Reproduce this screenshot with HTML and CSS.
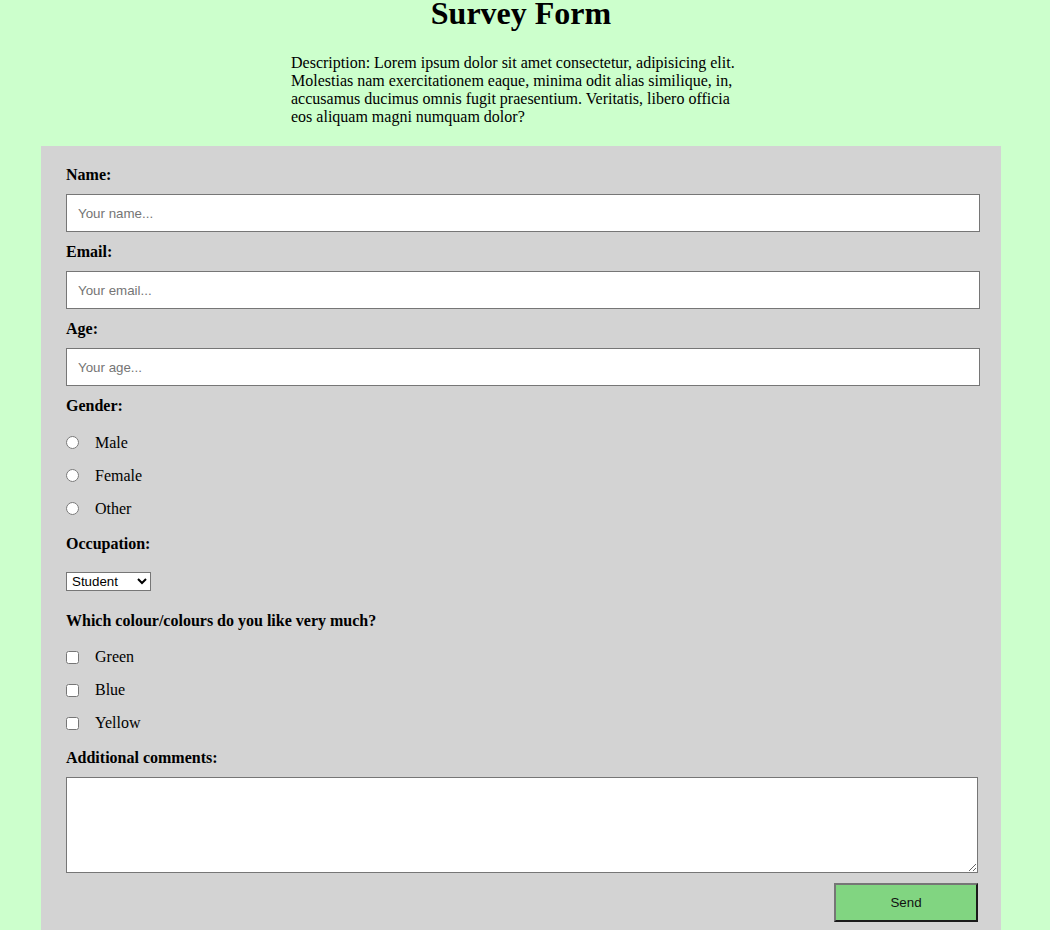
FILE: index.html
```html
<!DOCTYPE html>
<html lang="en">
<head>
<meta charset="utf-8">
<title>Survey Form</title>
<link rel="stylesheet" href="styles.css">
</head>
<body>
<div class="page">
  <h1 class="title">Survey Form</h1>
  <p class="description">Description: Lorem ipsum dolor sit amet consectetur, adipisicing elit. Molestias nam exercitationem eaque, minima odit alias similique, in, accusamus ducimus omnis fugit praesentium. Veritatis, libero officia eos aliquam magni numquam dolor?</p>
  <form class="survey">
    <label class="field-label" for="name">Name:</label>
    <input class="text-input" id="name" type="text" placeholder="Your name...">
    <label class="field-label" for="email">Email:</label>
    <input class="text-input" id="email" type="email" placeholder="Your email...">
    <label class="field-label" for="age">Age:</label>
    <input class="text-input" id="age" type="number" placeholder="Your age...">

    <div class="field-label">Gender:</div>
    <div class="choices">
      <label class="choice"><input class="choice-box" type="radio" name="gender">Male</label>
      <label class="choice"><input class="choice-box" type="radio" name="gender">Female</label>
      <label class="choice"><input class="choice-box" type="radio" name="gender">Other</label>
    </div>

    <label class="field-label" for="occupation">Occupation:</label>
    <select class="select" id="occupation">
      <option>Student</option>
      <option>Worker</option>
      <option>Other</option>
    </select>

    <div class="field-label">Which colour/colours do you like very much?</div>
    <div class="choices">
      <label class="choice"><input class="choice-box" type="checkbox">Green</label>
      <label class="choice"><input class="choice-box" type="checkbox">Blue</label>
      <label class="choice"><input class="choice-box" type="checkbox">Yellow</label>
    </div>

    <label class="field-label" for="comments">Additional comments:</label>
    <textarea class="comments" id="comments"></textarea>
    <div class="actions">
      <button class="send" type="submit">Send</button>
    </div>
  </form>
</div>
</body>
</html>
```

FILE: styles.css
```css
html, body {
  margin: 0;
  padding: 0;
  background: #ccffcc;
}

body {
  font-family: "Liberation Serif", "Times New Roman", serif;
  font-size: 16px;
  color: #000;
}

.page {
  width: 1042px;
}

.title {
  margin: 0 0 27px;
  font-size: 32px;
  line-height: 27px;
  font-weight: bold;
  text-align: center;
}

.description {
  width: 460px;
  margin: 0 auto;
  line-height: 18px;
}

.survey {
  width: 960px;
  box-sizing: border-box;
  margin: 20px auto 0;
  padding: 9px 21px 8px 25px;
  background: #d3d3d3;
}

.field-label {
  display: block;
  margin: 11px 0 10px;
  font-weight: bold;
  line-height: 18px;
}

.text-input {
  display: block;
  width: 914px;
  height: 38px;
  box-sizing: border-box;
  margin: 0;
  padding: 0 11px;
  border: 1px solid #767676;
  border-radius: 0;
  background: #fff;
  font-family: "Liberation Sans", Arial, sans-serif;
  font-size: 13.33px;
  color: #000;
  outline: none;
}

.text-input::placeholder {
  color: #757575;
}

.text-input::-webkit-outer-spin-button,
.text-input::-webkit-inner-spin-button {
  -webkit-appearance: none;
  margin: 0;
}

.choices {
  display: flex;
  flex-direction: column;
  gap: 15px;
  padding: 8.5px 0 6px;
}

.choice {
  display: flex;
  align-items: center;
  height: 18px;
  line-height: 18px;
}

.choice-box {
  width: 13px;
  height: 13px;
  margin: 0 16px 0 0;
}

.select {
  display: block;
  width: 85px;
  height: 19px;
  margin: 19px 0 21px;
  padding: 0 0 0 1px;
  font-family: "Liberation Sans", Arial, sans-serif;
  font-size: 13.33px;
  color: #000;
  background: #fff;
  border: 1px solid #767676;
  border-radius: 0;
}

.comments {
  display: block;
  width: 912px;
  height: 96px;
  box-sizing: border-box;
  margin: 0;
  border: 1px solid #767676;
  border-radius: 0;
  background: #fff;
  resize: both;
}

.actions {
  display: flex;
  justify-content: flex-end;
  width: 912px;
  margin-top: 10px;
}

.send {
  width: 144px;
  height: 39px;
  box-sizing: border-box;
  margin: 0;
  padding: 0;
  border-style: solid;
  border-width: 2px;
  border-color: #767676 #1a1a1a #1a1a1a #767676;
  background: #81d581;
  font-family: "Liberation Sans", Arial, sans-serif;
  font-size: 13.33px;
  color: #111;
}
```
